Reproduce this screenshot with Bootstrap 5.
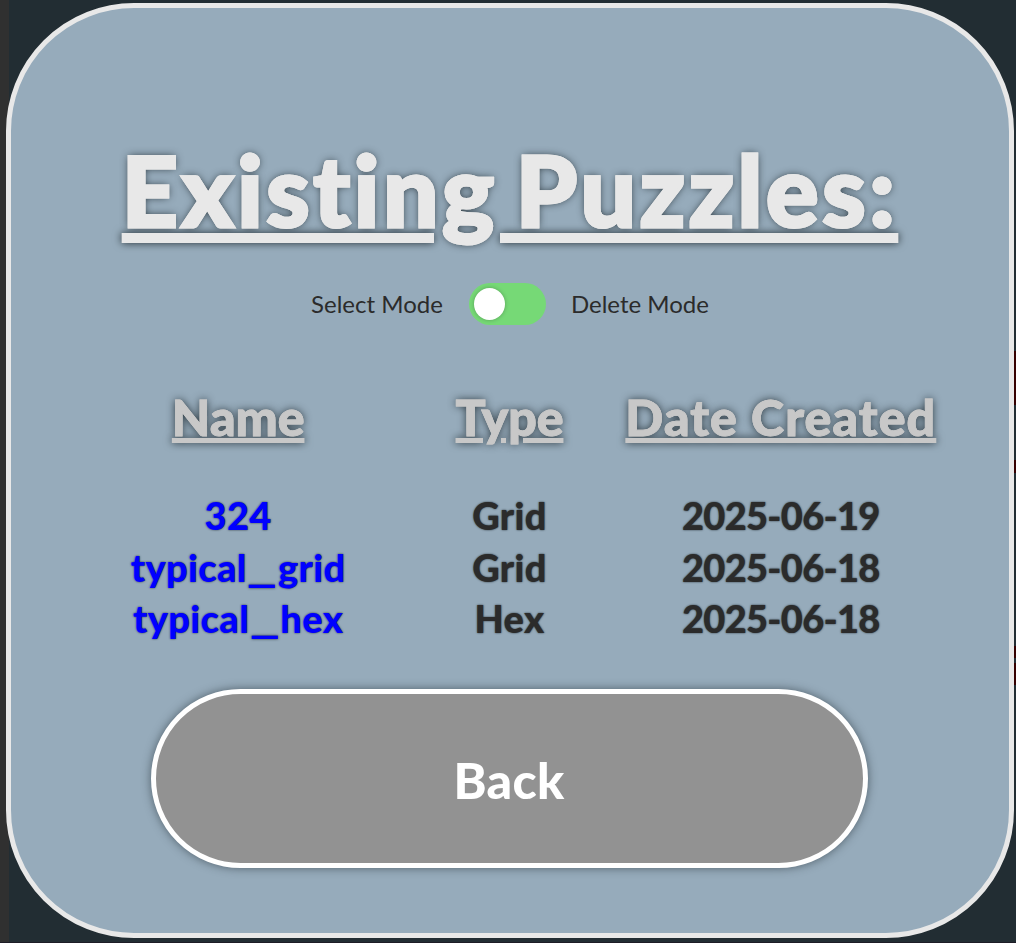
<!DOCTYPE html>
<html lang="en">
<head>
<meta charset="utf-8">
<meta name="viewport" content="width=device-width, initial-scale=1">
<title>Existing Puzzles</title>
<link href="https://cdn.jsdelivr.net/npm/bootstrap@5.3.0/dist/css/bootstrap.min.css" rel="stylesheet">
<style>
  body { background: linear-gradient(90deg, #303030 9px, #222d33 9px); height: 943px; padding: 3px 2px 4px 6px; border-bottom: 1px solid #1d1c26; font-family: Lato, "Open Sans", sans-serif; color: #2b2b2b; }
  .backdrop-blocks { right: 0; top: 0; width: 2px; height: 942px; background: linear-gradient(#0000 351px, #350000 351px 405px, #0000 405px 460px, #350000 460px 473px, #0000 473px 646px, #350000 646px 658px, #0000 658px 663px, #350000 663px 685px, #0000 685px); }
  .panel { height: 935px; background: #96abbb; border: 5px solid #e8e8e8; border-radius: 128px; }
  .title { font-size: 98px; font-weight: 900; line-height: 120px; letter-spacing: 3.6px; word-spacing: -9px; margin-top: 121px; color: #e8e8e8; -webkit-text-stroke: 3px #e8e8e8; text-decoration: underline 10px; text-underline-offset: 6px; text-shadow: 0 0 8px #222d33; }
  .modes { font-size: 24px; height: 42px; margin-top: 34px; }
  .toggle { width: 77px; height: 42px; margin: 0 25px 0 26px; background: #76d976; }
  .toggle span { width: 31px; height: 32px; margin-left: 5px; box-shadow: 0 0 4px #0004; }
  .puzzles { width: 814px; margin: 62px 1px 0 0; }
  .head { font-size: 50px; font-weight: 900; line-height: 60px; margin-bottom: 43px; color: #c8c8c8; -webkit-text-stroke: .8px #c8c8c8; text-decoration: underline 5px; text-underline-offset: 2px; text-shadow: 0 0 8px #222d33; }
  .wide { letter-spacing: 1.15px; }
  .entry { font-size: 38px; font-weight: 900; line-height: 51.5px; letter-spacing: .35px; text-shadow: 0 0 2px #222d33; }
  .entry a { color: #00f; }
  .entry time { letter-spacing: -.7px; }
  .dash { display: inline-block; margin: 0 6.5px; transform: scaleX(1.75); }
  .back { width: 717px; height: 179px; margin: 44px 2px 0 0; padding-top: 5px; background: #929292; border: 5px solid #fff; font-size: 50px; font-weight: 900; letter-spacing: .3px; color: #fff; box-shadow: 0 0 10px #222d3399; }
</style>
</head>
<body>
<div class="backdrop-blocks position-absolute"></div>
<main class="panel d-flex flex-column align-items-center text-nowrap">
  <h1 class="title mb-0">Existing Puzzles:</h1>
  <div class="modes d-flex align-items-center">
    <span>Select Mode</span>
    <div class="toggle rounded-pill d-flex align-items-center"><span class="bg-white rounded-circle"></span></div>
    <span>Delete Mode</span>
  </div>
  <div class="puzzles">
    <div class="row g-0">
      <div class="col-4 d-flex justify-content-center"><span class="head">Name</span></div>
      <div class="col-4 d-flex justify-content-center"><span class="head">Type</span></div>
      <div class="col-4 d-flex justify-content-center"><span class="head wide">Date Created</span></div>
    </div>
    <div class="row g-0 entry text-center">
      <div class="col-4"><a class="text-decoration-none" href="#">324</a></div>
      <div class="col-4">Grid</div>
      <div class="col-4"><time>2025-06-19</time></div>
    </div>
    <div class="row g-0 entry text-center">
      <div class="col-4"><a class="text-decoration-none" href="#">typical<span class="dash">_</span>grid</a></div>
      <div class="col-4">Grid</div>
      <div class="col-4"><time>2025-06-18</time></div>
    </div>
    <div class="row g-0 entry text-center">
      <div class="col-4"><a class="text-decoration-none" href="#">typical<span class="dash">_</span>hex</a></div>
      <div class="col-4">Hex</div>
      <div class="col-4"><time>2025-06-18</time></div>
    </div>
  </div>
  <button class="back rounded-pill">Back</button>
</main>
<script src="https://cdn.jsdelivr.net/npm/bootstrap@5.3.0/dist/js/bootstrap.bundle.min.js"></script>
</body>
</html>
